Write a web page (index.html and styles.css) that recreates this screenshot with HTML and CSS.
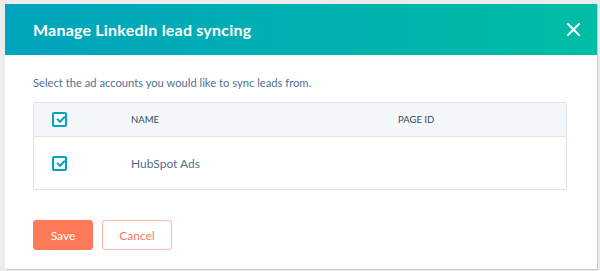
FILE: index.html
```html
<!DOCTYPE html>
<html lang="en">
<head>
  <meta charset="UTF-8">
  <title>Manage LinkedIn lead syncing</title>
  <link rel="stylesheet" href="styles.css">
</head>
<body>
  <div class="dialog">
    <div class="dialog-header">
      <h1>Manage LinkedIn lead syncing</h1>
      <button class="close-btn" aria-label="Close">
        <svg width="13" height="13" viewBox="0 0 13 13">
          <path d="M1 1 L12 12 M12 1 L1 12" stroke="#fff" stroke-width="2" stroke-linecap="round"/>
        </svg>
      </button>
    </div>

    <div class="dialog-body">
      <p class="intro">Select the ad accounts you would like to sync leads from.</p>

      <div class="accounts">
        <div class="row head">
          <div class="cell check"><span class="checkbox"></span></div>
          <div class="cell">NAME</div>
          <div class="cell">PAGE ID</div>
        </div>
        <div class="row">
          <div class="cell check"><span class="checkbox"></span></div>
          <div class="cell name">HubSpot Ads</div>
          <div class="cell"></div>
        </div>
      </div>

      <div class="actions">
        <button class="btn btn-primary">Save</button>
        <button class="btn btn-secondary">Cancel</button>
      </div>
    </div>
  </div>
</body>
</html>
```

FILE: styles.css
```css
* {
  box-sizing: border-box;
}
body {
  margin: 0;
  height: 271px;
  background: #ececec;
  font-family: 'Lato', 'Noto Sans', sans-serif;
  overflow: hidden;
  padding: 4px 3px 2px 5px;
}
.dialog {
  height: 100%;
  background: #fff;
  box-shadow: 1px 1px 0 #c9c9c9;
  display: flex;
  flex-direction: column;
}
.dialog-header {
  height: 51px;
  background: linear-gradient(to right, #00a4bd, #00bda5);
  display: flex;
  align-items: center;
  justify-content: space-between;
  padding: 0 16px 0 28px;
}
h1 {
  margin: 0;
  color: #fff;
  font-size: 16px;
  font-weight: 700;
  letter-spacing: 0.2px;
}
.close-btn {
  background: none;
  border: 0;
  padding: 0;
  width: 16px;
  height: 16px;
  display: flex;
  align-items: center;
  justify-content: center;
  cursor: pointer;
}
.dialog-body {
  padding: 20px 30px 0 28px;
}
.intro {
  margin: 0;
  color: #516f90;
  font-size: 11.2px;
  line-height: 16px;
}
.accounts {
  margin-top: 11px;
  border: 1px solid #dfe3eb;
  border-radius: 2px;
}
.row {
  display: grid;
  grid-template-columns: 97px 267px 1fr;
  align-items: center;
  height: 52px;
}
.row.head {
  height: 34px;
  background: #f5f8fa;
  border-bottom: 1px solid #dfe3eb;
  color: #33475b;
  font-size: 9.5px;
}
.cell.check {
  padding-left: 18px;
  display: flex;
}
.name {
  color: #516f90;
  font-size: 12px;
}
.checkbox {
  width: 15px;
  height: 15px;
  border: 2px solid #00a4bd;
  border-radius: 2px;
  position: relative;
  background: #fff;
}
.checkbox::after {
  content: '';
  position: absolute;
  left: 3px;
  top: 2px;
  width: 6px;
  height: 3px;
  border-left: 2px solid #00a4bd;
  border-bottom: 2px solid #00a4bd;
  transform: rotate(-45deg);
}
.actions {
  margin-top: 30px;
  display: flex;
  gap: 9px;
}
.btn {
  height: 30px;
  border-radius: 3px;
  font-family: inherit;
  font-size: 12px;
  cursor: pointer;
}
.btn-primary {
  width: 60px;
  background: #ff7a59;
  border: 1px solid #ff7a59;
  color: #fff;
}
.btn-secondary {
  width: 70px;
  background: #fff;
  border: 1px solid #ffb9a6;
  color: #ff7a59;
}
```
